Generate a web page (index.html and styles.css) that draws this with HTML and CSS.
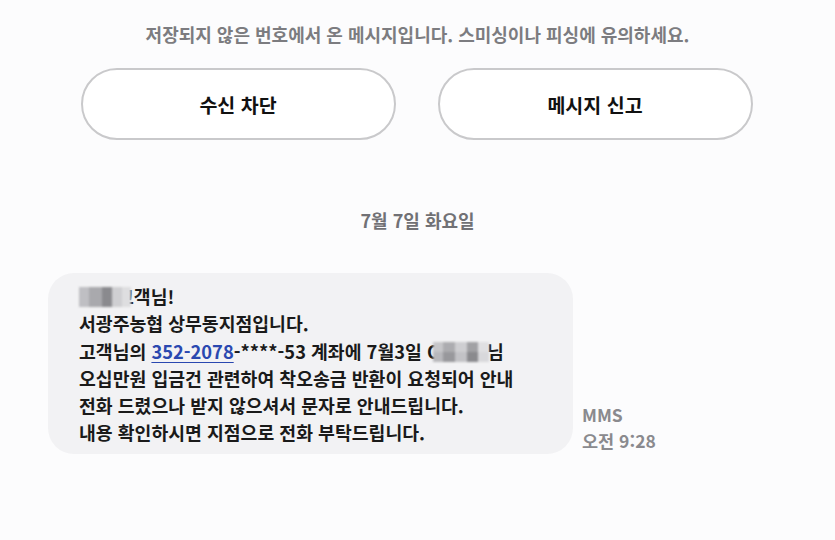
FILE: index.html
```html
<!DOCTYPE html>
<html lang="ko">
<head>
  <meta charset="UTF-8" />
  <meta name="viewport" content="width=device-width, initial-scale=1.0" />
  <title>메시지</title>
  <link rel="stylesheet" href="styles.css">
</head>
<body>
  <p class="notice">저장되지 않은 번호에서 온 메시지입니다. 스미싱이나 피싱에 유의하세요.</p>

  <div class="actions">
    <button type="button">수신 차단</button>
    <button type="button">메시지 신고</button>
  </div>

  <div class="date">7월 7일 화요일</div>

  <div class="thread">
    <div class="bubble">
      <span class="mask mask-name"></span>고객님!<br>
      서광주농협 상무동지점입니다.<br>
      고객님의 <a href="#" class="link">352-2078</a>-****-53 계좌에 7월3일 O<span class="mask mask-sender"></span>님<br>
      오십만원 입금건 관련하여 착오송금 반환이 요청되어 안내<br>
      전화 드렸으나 받지 않으셔서 문자로 안내드립니다.<br>
      내용 확인하시면 지점으로 전화 부탁드립니다.
    </div>
    <div class="meta">
      <span>MMS</span>
      <span>오전 9:28</span>
    </div>
  </div>
</body>
</html>
```

FILE: styles.css
```css
:root {
  --bg: #fcfcfd;
  --bubble: #f2f2f4;
  --text: #1a1a1a;
  --muted: #7c7c80;
  --link: #2a48b0;
}

* {
  box-sizing: border-box;
}

body {
  margin: 0;
  background: var(--bg);
  font-family: "Noto Sans CJK KR", "Noto Sans", sans-serif;
  color: var(--text);
}

.notice {
  margin: 0;
  padding-top: 22px;
  text-align: center;
  font-size: 18px;
  line-height: 24px;
  font-weight: 700;
  color: var(--muted);
}

.actions {
  display: flex;
  justify-content: center;
  gap: 42px;
  margin-top: 22px;
  padding-right: 2px;
}

.actions button {
  width: 315px;
  height: 72px;
  border: 2px solid #c9c9cb;
  border-radius: 36px;
  background: #fff;
  font-family: inherit;
  font-size: 19.5px;
  font-weight: 700;
  color: #111;
  cursor: pointer;
}

.date {
  margin-top: 68px;
  text-align: center;
  font-size: 18px;
  line-height: 24px;
  font-weight: 700;
  color: #717175;
}

.thread {
  display: flex;
  align-items: flex-end;
  gap: 9px;
  margin-top: 41px;
  padding-left: 48px;
}

.bubble {
  width: 525px;
  padding: 10px 16px 7px 31px;
  background: var(--bubble);
  border-radius: 26px;
  font-size: 18.3px;
  line-height: 27.3px;
  font-weight: 700;
  white-space: nowrap;
}

.link {
  color: var(--link);
  text-decoration: underline;
  text-underline-offset: 3px;
}

/* pixelated cover over private names */
.mask {
  position: relative;
  display: inline-block;
  height: 20px;
  vertical-align: -3px;
  filter: blur(1px);
}

.mask-name {
  width: 52px;
  margin-right: -14px;
  background:
    linear-gradient(90deg, #bfbfc3 0 20%, #a9a9ad 20% 44%, #8a8a8e 44% 64%, #cfcfd2 64% 82%, #dedee0 82%);
}

.mask-sender {
  width: 56px;
  margin-left: -8px;
  margin-right: -2px;
  background:
    linear-gradient(180deg, rgba(255,255,255,0.2) 0 50%, rgba(0,0,0,0) 50%),
    linear-gradient(90deg, #b8b8bc 0 18%, #98989c 18% 40%, #c2c2c6 40% 60%, #8a8a8e 60% 80%, #d8d8db 80%);
}

.meta {
  display: flex;
  flex-direction: column;
  font-size: 17.5px;
  line-height: 26px;
  font-weight: 700;
  color: #8a8a8e;
}
```
